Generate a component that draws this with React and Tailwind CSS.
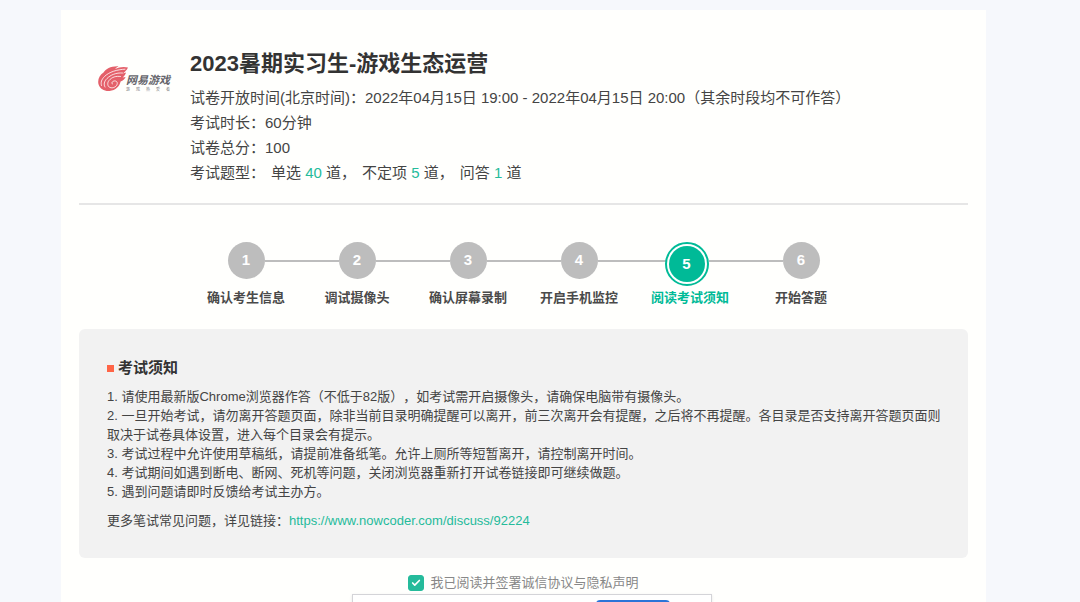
import { useState } from "react";
import clsx from "clsx";
import { Check } from "lucide-react";

const steps = [
  "确认考生信息",
  "调试摄像头",
  "确认屏幕录制",
  "开启手机监控",
  "阅读考试须知",
  "开始答题",
];

const rules = [
  "1. 请使用最新版Chrome浏览器作答（不低于82版），如考试需开启摄像头，请确保电脑带有摄像头。",
  "2. 一旦开始考试，请勿离开答题页面，除非当前目录明确提醒可以离开，前三次离开会有提醒，之后将不再提醒。各目录是否支持离开答题页面则取决于试卷具体设置，进入每个目录会有提示。",
  "3. 考试过程中允许使用草稿纸，请提前准备纸笔。允许上厕所等短暂离开，请控制离开时间。",
  "4. 考试期间如遇到断电、断网、死机等问题，关闭浏览器重新打开试卷链接即可继续做题。",
  "5. 遇到问题请即时反馈给考试主办方。",
];

const Logo = () => (
  <div className="flex w-[74px] shrink-0 items-center">
    <svg viewBox="0 0 30 26" className="h-[26px] w-[30px] shrink-0" fill="none">
      <path
        d="M30 1.500C26 .3 21 1 17 3c1-1.500 2-2 3.500-2.600C13 0 8 3 5.500 6.500 1.500 9-.8 14 .6 18.500c1.500 4.500 6 7 11 6.500 6-.7 10-4.500 11-9.500 2.500-1 4-2.500 5-4.500l-3 .4c2-1.500 3-3.200 3.400-5l-3.200 1C27 6 29 4 30 1.500Z"
        fill="#e4606a"
      />
      <g stroke="#fff" strokeWidth="0.8" strokeLinecap="round">
        <path d="M27 3.200C19 3.500 11 6 6.500 10.500c-3 3-4 6-3 9" />
        <path d="M24.500 7c-6.500-.5-12 2-15.500 5.500-3 3-3.500 6-2 8.500" />
        <path d="M22.500 10.500c-4.500-.7-8.500.5-11.500 4-2 2.500-1.500 6 1 7 3 1 6-.5 7-3s-1-4-3-3.500-3 2.500-1.500 3" />
      </g>
    </svg>
    <div className="-ml-0.5 mt-2 flex flex-col">
      <span className="whitespace-nowrap text-[11px] font-bold italic leading-3 text-[#66666c]">
        网易游戏
      </span>
      <span className="mt-0.5 flex justify-between text-[4px] leading-1 text-[#77777c]">
        {["游", "戏", "热", "爱", "者"].map((char) => (
          <span key={char}>{char}</span>
        ))}
      </span>
    </div>
  </div>
);

const Stepper = ({ current }) => (
  <ol className="mx-auto grid w-[666px] grid-cols-6">
    {steps.map((label, index) => {
      const active = index + 1 === current;
      return (
        <li key={label} className="flex flex-col items-center gap-2.5">
          <div className="flex h-[38px] w-full items-center">
            <span className={clsx("h-0.5 flex-1", index > 0 && "bg-[#bdbdbd]")} />
            <div className="relative flex h-[38px] w-[37px] items-start justify-end">
              {active ? (
                <span className="flex size-11 shrink-0 rounded-full border-2 border-[#00ba97] bg-white p-0.5">
                  <span className="flex flex-1 items-center justify-center rounded-full bg-[#00ba97] text-[15px] font-bold text-white">
                    {index + 1}
                  </span>
                </span>
              ) : (
                <span className="flex size-[37px] shrink-0 items-center justify-center rounded-full bg-[#bdbdbd] text-[15px] font-bold text-white">
                  {index + 1}
                </span>
              )}
            </div>
            <span
              className={clsx("h-0.5 flex-1", index < steps.length - 1 && "bg-[#bdbdbd]")}
            />
          </div>
          <span
            className={clsx(
              "text-[13px] font-bold leading-4",
              active ? "text-[#00ba97]" : "text-[#4a4a4a]"
            )}
          >
            {label}
          </span>
        </li>
      );
    })}
  </ol>
);

const Count = ({ children }) => <span className="text-[#25bb9b]">{children}</span>;

const App = () => {
  const [agreed, setAgreed] = useState(true);

  return (
    <div className="h-screen overflow-hidden bg-[#f6f8fc] pt-2.5 pr-[94px] pl-[61px] font-['Liberation_Sans','Noto_Sans_CJK_SC',sans-serif] text-[#444] [text-spacing-trim:space-all]">
      <main className="min-h-full bg-[#fffffd] px-[18px] pt-10">

        {/* EXAM INFO */}
        <header className="flex gap-[18px] border-b-2 border-[#e6e6e6] pb-[18px] pl-[19px]">
          <div className="pt-4">
            <Logo />
          </div>
          <div className="text-[15px] leading-[25px]">
            <h1 className="mb-[7px] text-[22px] font-bold leading-7 text-[#333]">
              2023暑期实习生-游戏生态运营
            </h1>
            <p>
              试卷开放时间(北京时间)：2022年04月15日 19:00 - 2022年04月15日 20:00（其余时段均不可作答）
            </p>
            <p>考试时长：60分钟</p>
            <p>试卷总分：100</p>
            <p className="flex gap-1.5">
              <span>考试题型：</span>
              <span>单选 <Count>40</Count> 道，</span>
              <span>不定项 <Count>5</Count> 道，</span>
              <span>问答 <Count>1</Count> 道</span>
            </p>
          </div>
        </header>

        {/* PROGRESS */}
        <div className="pt-[37px] pb-[23px]">
          <Stepper current={5} />
        </div>

        {/* NOTICE */}
        <section className="rounded-md bg-[#f2f2f2] pt-7 pr-6 pb-7 pl-7 text-[13px] leading-[19px]">
          <h2 className="mb-2 flex items-center gap-1 text-[15px] font-bold leading-[22px] text-[#333]">
            <span className="size-[7px] bg-[#ff6547]" />
            考试须知
          </h2>
          {rules.map((rule) => (
            <p key={rule}>{rule}</p>
          ))}
          <p className="mt-2.5">
            更多笔试常见问题，详见链接：
            <a href="https://www.nowcoder.com/discuss/92224" className="text-[#25bb9b]">
              https://www.nowcoder.com/discuss/92224
            </a>
          </p>
        </section>

        {/* AGREEMENT */}
        <label className="mt-4 flex items-center justify-center gap-1.5 text-[13px] leading-[18px] text-[#888]">
          <span className="relative flex size-4">
            <input
              type="checkbox"
              checked={agreed}
              onChange={(e) => setAgreed(e.target.checked)}
              className="size-4 appearance-none rounded-[3px] border border-[#25bb9b] checked:bg-[#25bb9b]"
            />
            {agreed && (
              <Check
                className="pointer-events-none absolute inset-0 m-auto size-2.5 text-white"
                strokeWidth={4}
              />
            )}
          </span>
          我已阅读并签署诚信协议与隐私声明
        </label>
      </main>

      {/* FLOATING BAR */}
      <div className="fixed bottom-0 left-[352px] flex h-2 w-[360px] items-start justify-end overflow-hidden border border-b-0 border-[#d4d4d8] bg-white pt-[5px] pr-[41px] shadow">
        <button type="button" aria-label="确定" className="h-7 w-[74px] shrink-0 rounded bg-[#2b74d8]" />
      </div>
    </div>
  );
};

export default App;
